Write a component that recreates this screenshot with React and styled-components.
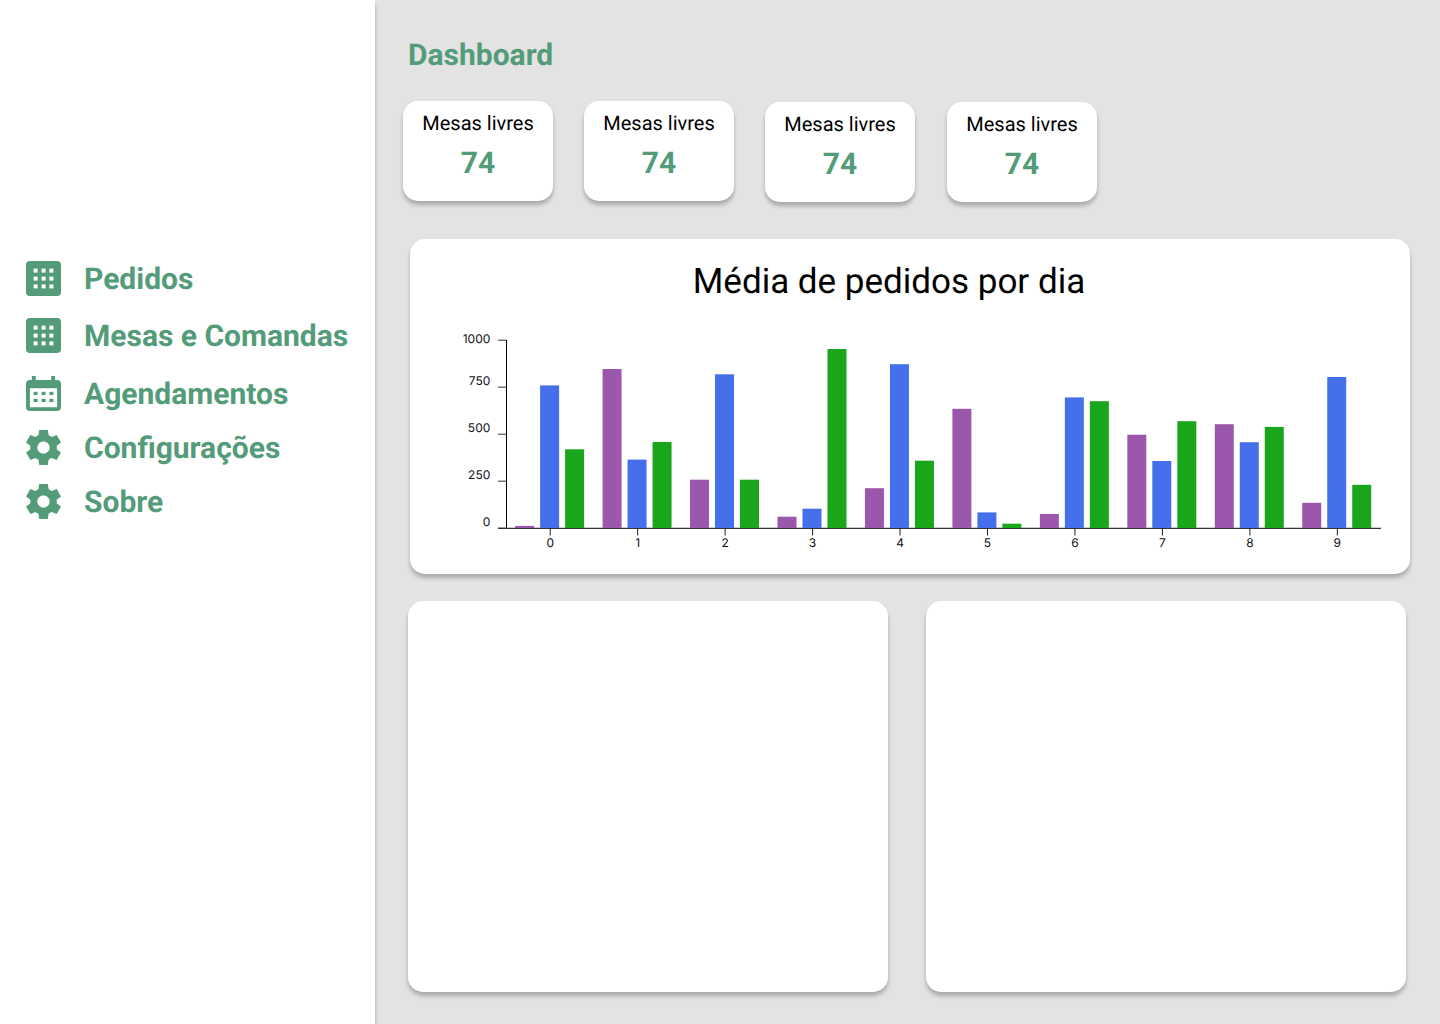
import React from "react";
import styled, { createGlobalStyle } from "styled-components";

const GREEN = "#549c79";
const PURPLE = "#9b57ab";
const BLUE = "#466fec";
const LEAF = "#1aa61a";

const GlobalStyle = createGlobalStyle`
  *, *::before, *::after { box-sizing: border-box; }
  body {
    margin: 0;
    background: #e3e3e3;
    font-family: Roboto, sans-serif;
    text-rendering: geometricPrecision;
  }
  h1, h2, p, ul { margin: 0; padding: 0; }
`;

const Page = styled.div`
  display: flex;
  width: 1440px;
  height: 1024px;
  overflow: hidden;
  background: #e3e3e3;
`;

const Sidebar = styled.nav`
  flex: 0 0 375px;
  padding: 261px 0 0 26px;
  background: #fff;
  box-shadow: 0 4px 4px rgba(0, 0, 0, 0.25);
`;

const Menu = styled.ul`
  display: flex;
  flex-direction: column;
  list-style: none;
`;

const MenuItem = styled.li`
  display: flex;
  align-items: center;
  gap: 23px;
  height: 35px;
  margin-bottom: ${(p) => p.$gap}px;
  color: ${GREEN};
  font-size: 30px;
  font-weight: 700;
  line-height: 35px;
  white-space: nowrap;
`;

const MenuLabel = styled.span`
  padding-top: 2px;
`;

const Icon = styled.svg`
  flex: none;
  width: 35px;
  height: 35px;
  fill: currentColor;
`;

const Main = styled.main`
  flex: 1;
  display: flex;
  flex-direction: column;
  padding: 38px 0 0 28px;
`;

const Title = styled.h1`
  margin-left: 5px;
  color: ${GREEN};
  font-size: 30px;
  font-weight: 700;
  line-height: 35px;
`;

const Stats = styled.section`
  display: flex;
  gap: 31px;
  margin-top: 28px;
  height: 101px;
`;

const Card = styled.section`
  background: #fff;
  border-radius: 15px;
  box-shadow: 0 4px 4px rgba(0, 0, 0, 0.25);
`;

const StatCard = styled(Card)`
  display: flex;
  flex-direction: column;
  align-items: center;
  width: 150px;
  height: 100px;
  padding-top: 11px;
  margin: ${(p) => p.$margin || 0};
`;

const StatLabel = styled.p`
  font-size: 20px;
  line-height: 23px;
`;

const StatValue = styled.p`
  margin-top: 11px;
  color: ${GREEN};
  font-size: 30px;
  font-weight: 700;
  line-height: 35px;
`;

const ChartCard = styled(Card)`
  width: 1000px;
  height: 335px;
  margin: 37px 0 0 7px;
  padding-top: 22px;
`;

const ChartTitle = styled.h2`
  height: 41px;
  padding-right: 42px;
  font-size: 35px;
  font-weight: 400;
  line-height: 42px;
  text-align: center;
`;

const Chart = styled.svg`
  display: block;
  width: 1000px;
  height: 260px;
  font-family: Inter, sans-serif;
  font-size: 12px;
  fill: #111;
`;

const Panels = styled.div`
  display: flex;
  gap: 38px;
  margin: 27px 0 0 5px;
`;

const Panel = styled(Card)`
  width: 480px;
  height: 391px;
`;

const cells = [7.6, 15.6, 23.4];

const GridIcon = () => (
  <Icon viewBox="0 0 35 35">
    <rect width="35" height="35" rx="3.9" />
    {cells.map((y) => cells.map((x) => (
      <rect key={`${x}-${y}`} x={x} y={y} width="4" height="4" fill="#fff" />
    )))}
  </Icon>
);

const CalendarIcon = () => (
  <Icon viewBox="0 0 35 35">
    <path fillRule="evenodd" d="M5.9 0h3.9v3.9h15.4V0h3.9v3.9h2a3.9 3.9 0 0 1 3.9 3.9v23.3a3.9 3.9 0 0 1-3.9 3.9H3.9A3.9 3.9 0 0 1 0 31.1V7.8a3.9 3.9 0 0 1 3.9-3.9h2zM3.9 12.2v19h27.2v-19z" />
    {[15.8, 22.8].map((y) => cells.map((x) => (
      <rect key={`${x}-${y}`} x={x} y={y} width="4" height="3.3" />
    )))}
  </Icon>
);

const GearIcon = () => (
  <Icon viewBox="2.1 2 19.8 20" preserveAspectRatio="none">
    <path d="M19.44 12.99l.01-.02c.04-.32.08-.64.08-.99 0-.34-.03-.66-.07-.99l.01.02 2.44-1.92-2.43-4.22-2.87 1.16.01.01c-.52-.4-1.09-.74-1.71-1h.01L14.44 2H9.57l-.44 3.07h.01c-.62.26-1.19.6-1.71 1l.01-.01-2.88-1.17-2.44 4.22 2.44 1.92.01-.02c-.04.33-.07.65-.07.99 0 .35.03.67.08.99l.01.02-2.43 1.91 2.43 4.2 2.88-1.15-.02-.04c.53.41 1.1.75 1.73 1.01h-.03L9.58 22h4.85l.44-3.07h-.01c.62-.26 1.2-.6 1.73-1.01l-.02.04 2.88 1.15 2.43-4.2-2.44-1.92zM12 15.5c-1.93 0-3.5-1.57-3.5-3.5s1.57-3.5 3.5-3.5 3.5 1.57 3.5 3.5-1.57 3.5-3.5 3.5z" />
  </Icon>
);

const menu = [
  ["Pedidos", GridIcon, 22],
  ["Mesas e Comandas", GridIcon, 23],
  ["Agendamentos", CalendarIcon, 19],
  ["Configurações", GearIcon, 19],
  ["Sobre", GearIcon, 0],
];

// Bar heights in pixels, one triple per day.
const days = [
  [2.1, 142.6, 78.7],
  [159, 68.4, 86],
  [48.3, 153.7, 48.3],
  [11.3, 19.3, 179],
  [39.8, 163.8, 67.3],
  [119.2, 15.6, 4.3],
  [14, 130.6, 126.8],
  [93.3, 67, 106.8],
  [103.8, 85.8, 101.1],
  [25.2, 151, 43.2],
];

const BASE = 226;
const fills = [PURPLE, BLUE, LEAF];

const BarChart = () => (
  <Chart viewBox="0 0 1000 260">
    <path d="M96.5 38v188M88 226.3h883" stroke="#000" fill="none" />
    {days.map((bars, i) => bars.map((h, j) => (
      <rect
        key={`${i}-${j}`}
        x={105.1 + i * 87.46 + j * 25}
        y={BASE - h}
        width="19"
        height={h}
        fill={fills[j]}
      />
    )))}
    {[1000, 750, 500, 250, 0].map((v, i) => (
      <g key={v}>
        <path d={`M88 ${38.2 + i * 47}h8`} stroke="#333" />
        <text x="80.3" y={[41.3, 83.3, 130.3, 177.3, 224.3][i]} textAnchor="end">{v}</text>
      </g>
    ))}
    {days.map((_, i) => (
      <g key={i}>
        <path d={`M${140.2 + i * 87.46} 226v7.5`} stroke="#222" />
        <text x={140.2 + i * 87.46} y="245.4" textAnchor="middle">{i}</text>
      </g>
    ))}
  </Chart>
);

export default function App() {
  return (
    <Page>
      <GlobalStyle />
      <Sidebar>
        <Menu>
          {menu.map(([label, Glyph, gap]) => (
            <MenuItem key={label} $gap={gap}>
              <Glyph />
              <MenuLabel>{label}</MenuLabel>
            </MenuItem>
          ))}
        </Menu>
      </Sidebar>
      <Main>
        <Title>Dashboard</Title>
        <Stats>
          {["0", "0", "1px 0 0", "1px 0 0 1px"].map((m, i) => (
            <StatCard key={i} $margin={m}>
              <StatLabel>Mesas livres</StatLabel>
              <StatValue>74</StatValue>
            </StatCard>
          ))}
        </Stats>
        <ChartCard>
          <ChartTitle>Média de pedidos por dia</ChartTitle>
          <BarChart />
        </ChartCard>
        <Panels>
          <Panel />
          <Panel />
        </Panels>
      </Main>
    </Page>
  );
}
